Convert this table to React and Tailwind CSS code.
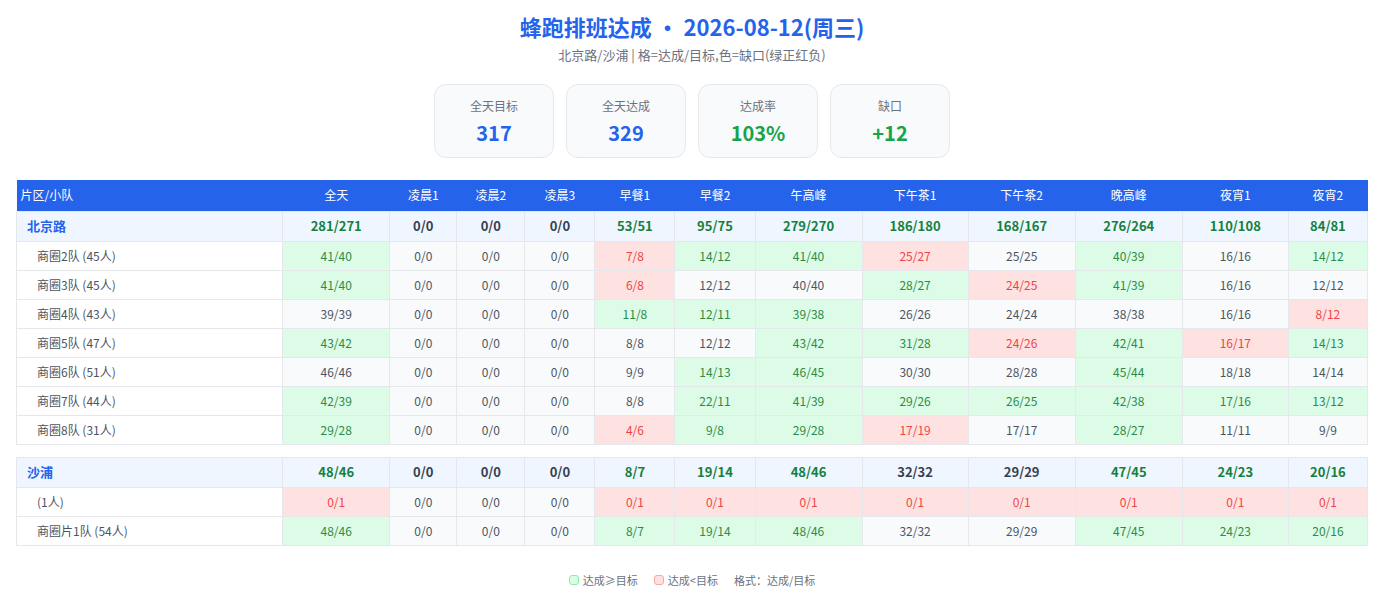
import React from 'react';

const cols = ['全天', '凌晨1', '凌晨2', '凌晨3', '早餐1', '早餐2', '午高峰', '下午茶1', '下午茶2', '晚高峰', '夜宵1', '夜宵2'];
const widths = [266, 107, 67, 68, 70, 80, 80, 107, 106, 107, 107, 106, 79];

const zeros = ['0/0', '0/0', '0/0'];

const groups = [
  {
    name: '北京路',
    total: ['281/271', ...zeros, '53/51', '95/75', '279/270', '186/180', '168/167', '276/264', '110/108', '84/81'],
    teams: [
      { name: '商圈2队 (45人)', vals: ['41/40', ...zeros, '7/8', '14/12', '41/40', '25/27', '25/25', '40/39', '16/16', '14/12'] },
      { name: '商圈3队 (45人)', vals: ['41/40', ...zeros, '6/8', '12/12', '40/40', '28/27', '24/25', '41/39', '16/16', '12/12'] },
      { name: '商圈4队 (43人)', vals: ['39/39', ...zeros, '11/8', '12/11', '39/38', '26/26', '24/24', '38/38', '16/16', '8/12'] },
      { name: '商圈5队 (47人)', vals: ['43/42', ...zeros, '8/8', '12/12', '43/42', '31/28', '24/26', '42/41', '16/17', '14/13'] },
      { name: '商圈6队 (51人)', vals: ['46/46', ...zeros, '9/9', '14/13', '46/45', '30/30', '28/28', '45/44', '18/18', '14/14'] },
      { name: '商圈7队 (44人)', vals: ['42/39', ...zeros, '8/8', '22/11', '41/39', '29/26', '26/25', '42/38', '17/16', '13/12'] },
      { name: '商圈8队 (31人)', vals: ['29/28', ...zeros, '4/6', '9/8', '29/28', '17/19', '17/17', '28/27', '11/11', '9/9'] },
    ],
  },
  {
    name: '沙浦',
    total: ['48/46', ...zeros, '8/7', '19/14', '48/46', '32/32', '29/29', '47/45', '24/23', '20/16'],
    teams: [
      { name: '(1人)', vals: ['0/1', ...zeros, '0/1', '0/1', '0/1', '0/1', '0/1', '0/1', '0/1', '0/1'] },
      { name: '商圈片1队 (54人)', vals: ['48/46', ...zeros, '8/7', '19/14', '48/46', '32/32', '29/29', '47/45', '24/23', '20/16'] },
    ],
  },
];

const gap = (v) => {
  const [a, b] = v.split('/').map(Number);
  return a - b;
};

const cellClass = (v) => {
  const g = gap(v);
  if (g > 0) return 'bg-[#dcfce7] text-[#2e8a47]';
  if (g < 0) return 'bg-[#fee2e2] text-[#ef4444]';
  return 'bg-[#f8fafc] text-[#4b5563]';
};

const totalClass = (v) => {
  const g = gap(v);
  if (g > 0) return 'text-[#15803d]';
  if (g < 0) return 'text-[#dc2626]';
  return 'text-[#374151]';
};

const stats = [
  { label: '全天目标', value: '317', color: 'text-[#2563eb]' },
  { label: '全天达成', value: '329', color: 'text-[#2563eb]' },
  { label: '达成率', value: '103%', color: 'text-[#16a34a]' },
  { label: '缺口', value: '+12', color: 'text-[#16a34a]' },
];

const Colgroup = () => (
  <colgroup>
    {widths.map((w, i) => <col key={i} style={{ width: w }} />)}
  </colgroup>
);

const GroupTable = ({ group, header }) => (
  <table className="w-full table-fixed border-collapse text-[12px]">
    <Colgroup />
    {header && (
      <thead>
        <tr className="bg-[#2563eb] text-white h-[31px]">
          <th className="text-left font-normal pl-1">片区/小队</th>
          {cols.map((c) => <th key={c} className="font-normal text-center">{c}</th>)}
        </tr>
      </thead>
    )}
    <tbody>
      <tr className="bg-[#eff6ff] h-[30px]">
        <td className="border border-[#e5e7eb] pl-2.5 text-[13px] font-bold text-[#2563eb]">{group.name}</td>
        {group.total.map((v, i) => (
          <td key={i} className={`border border-[#e5e7eb] text-center text-[13px] font-bold ${totalClass(v)}`}>{v}</td>
        ))}
      </tr>
      {group.teams.map((t) => (
        <tr key={t.name} className="h-[29px]">
          <td className="border border-[#e5e7eb] bg-white pl-5 text-[#4b5563]">{t.name}</td>
          {t.vals.map((v, i) => (
            <td key={i} className={`border border-[#e5e7eb] text-center ${cellClass(v)}`}>{v}</td>
          ))}
        </tr>
      ))}
    </tbody>
  </table>
);

const App = () => {
  return (
    <div className="min-h-screen bg-white px-4 pt-3 pb-4 font-['Noto_Sans_CJK_SC','Noto_Sans',sans-serif]">
      <h1 className="text-center text-[22px] leading-7 font-bold text-[#2563eb]">蜂跑排班达成 · 2026-08-12(周三)</h1>
      <p className="mt-[5px] text-center text-[13px] leading-5 text-[#6b7280]">北京路/沙浦 | 格=达成/目标,色=缺口(绿正红负)</p>

      <div className="mt-[19px] flex justify-center gap-3">
        {stats.map((s) => (
          <div key={s.label} className="w-[120px] h-[74px] rounded-xl border border-[#e5e7eb] bg-[#f8fafc] pt-3 text-center">
            <div className="text-[12px] leading-[18px] text-[#6b7280]">{s.label}</div>
            <div className={`mt-1 text-[20px] leading-7 font-bold ${s.color}`}>{s.value}</div>
          </div>
        ))}
      </div>

      <div className="mt-[22px]">
        <GroupTable group={groups[0]} header />
      </div>
      <div className="mt-3">
        <GroupTable group={groups[1]} />
      </div>

      <div className="mt-[26px] flex justify-center items-center gap-4 text-[11px] leading-4 text-[#6b7280]">
        <span className="flex items-center gap-1">
          <span className="inline-block w-[10px] h-[10px] rounded-[3px] border border-[#86efac] bg-[#dcfce7]" />
          达成≥目标
        </span>
        <span className="flex items-center gap-1">
          <span className="inline-block w-[10px] h-[10px] rounded-[3px] border border-[#fca5a5] bg-[#fee2e2]" />
          达成&lt;目标
        </span>
        <span>格式：达成/目标</span>
      </div>
    </div>
  );
};

export default App;
